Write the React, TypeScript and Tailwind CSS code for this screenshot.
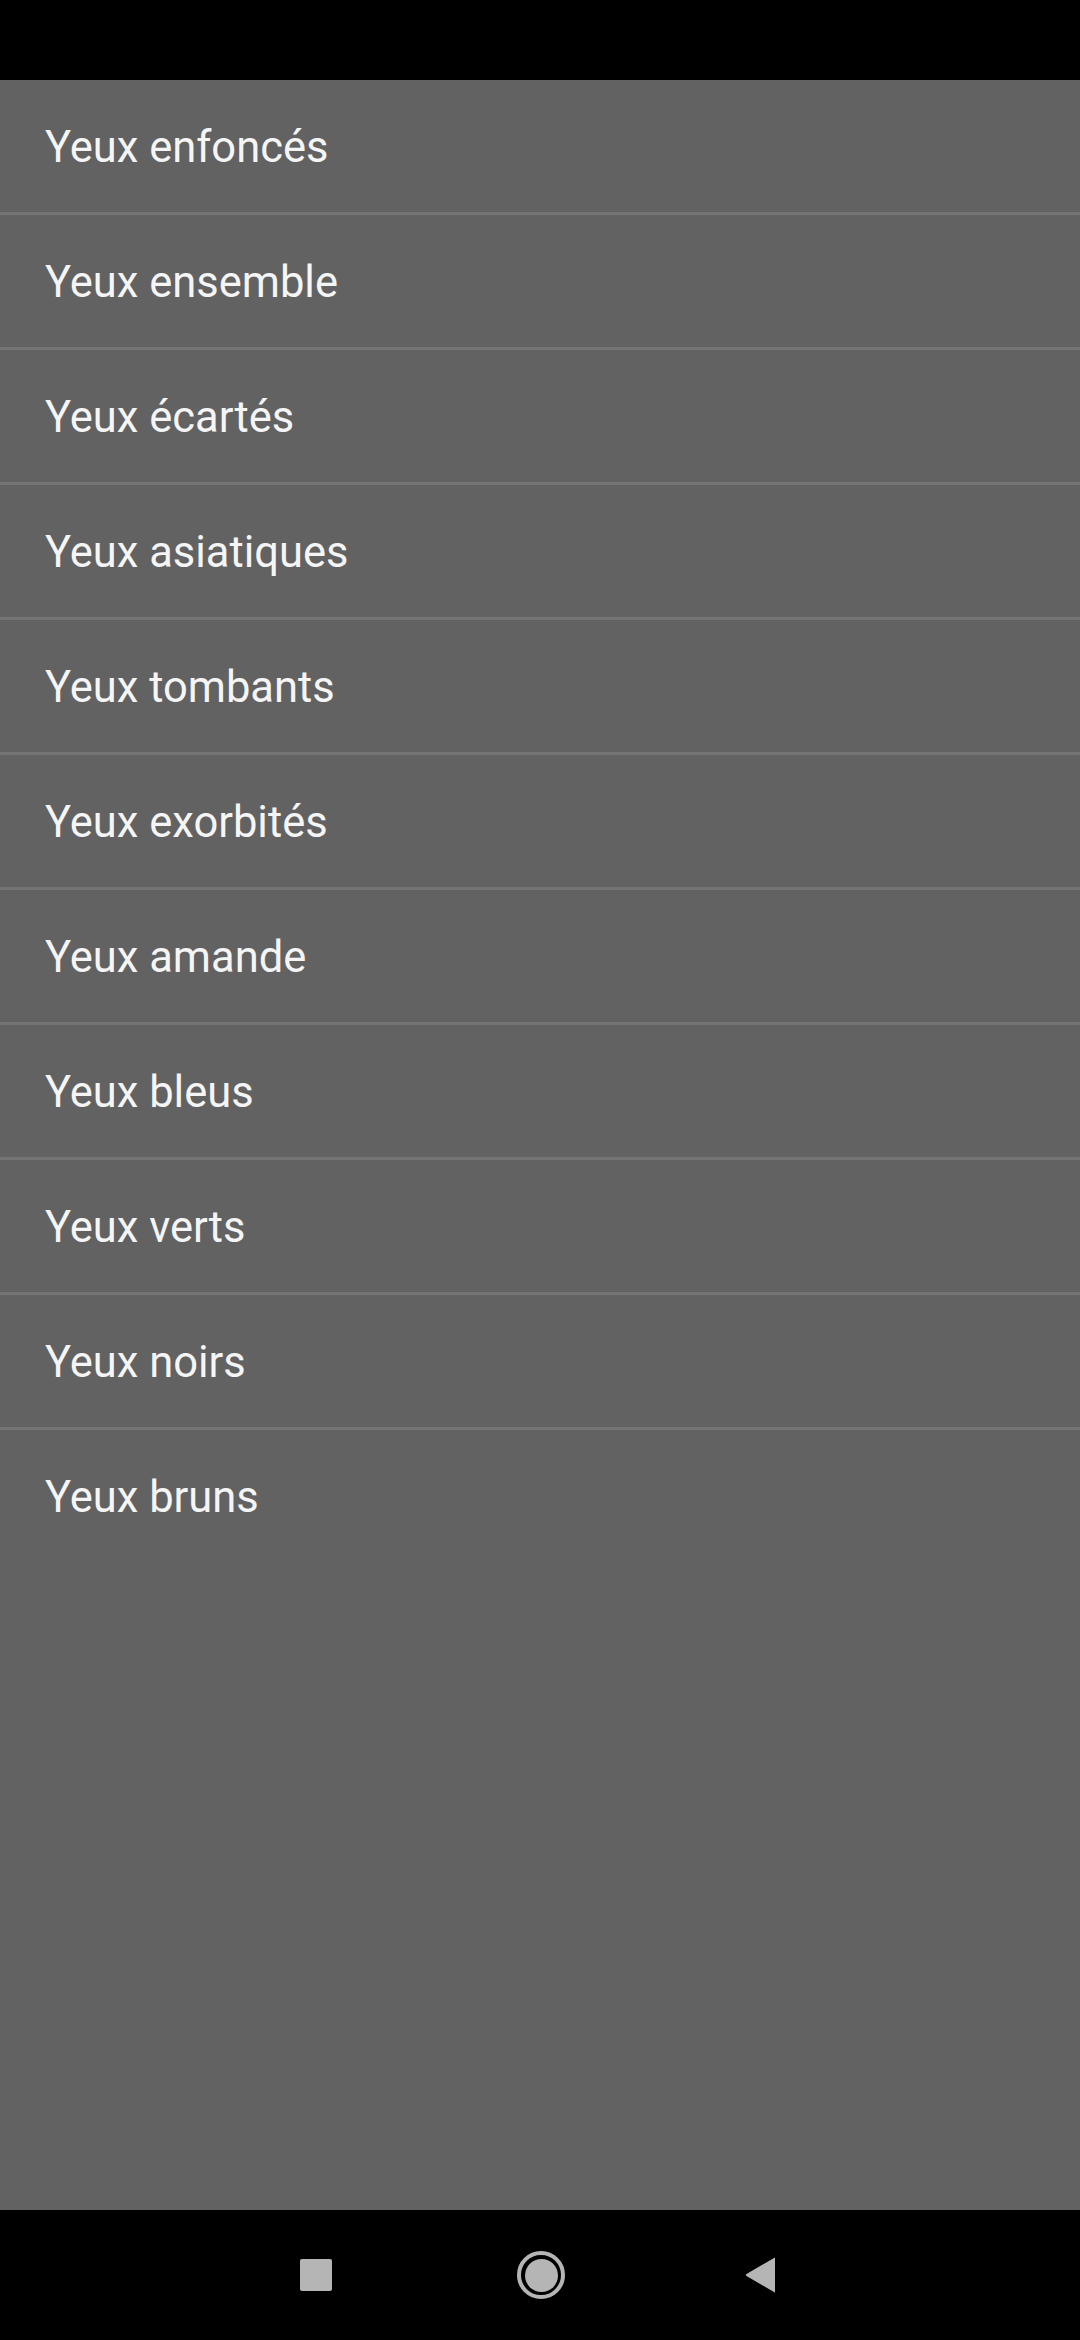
const items = [
  'Yeux enfoncés',
  'Yeux ensemble',
  'Yeux écartés',
  'Yeux asiatiques',
  'Yeux tombants',
  'Yeux exorbités',
  'Yeux amande',
  'Yeux bleus',
  'Yeux verts',
  'Yeux noirs',
  'Yeux bruns',
]

export default function App() {
  return (
    <div className="w-[1080px] h-[2340px] flex flex-col bg-[#626262] overflow-hidden" style={{ fontFamily: 'Roboto, "Noto Sans", sans-serif' }}>
      {/* status bar */}
      <div className="h-[80px] shrink-0 bg-black" />

      {/* list */}
      <div className="flex-1 flex flex-col">
        {items.map((t, i) => (
          <div key={t}>
            <div className="h-[132px] flex items-center pl-[45px] pt-[3px] text-[43.5px] text-[#f5f5f5] leading-none">{t}</div>
            {i < items.length - 1 && <div className="h-[3px] bg-[#747474]" />}
          </div>
        ))}
      </div>

      {/* nav bar */}
      <div className="h-[130px] shrink-0 bg-black flex items-center pl-[300px]">
        <div className="w-[32px] h-[32px] rounded-[2px] bg-[#b5b5b5]" />
        <div className="ml-[185px] w-[48px] h-[48px] rounded-full border-[4px] border-[#b5b5b5] flex items-center justify-center">
          <div className="w-[33px] h-[33px] rounded-full bg-[#b5b5b5]" />
        </div>
        <svg className="ml-[180px]" width="31" height="36" viewBox="0 0 31 36">
          <path d="M30 1 L30 35 Q30 36 29 35 L1.5 19 Q0 18 1.5 17 L29 1 Q30 0 30 1 Z" fill="#b5b5b5" />
        </svg>
      </div>
    </div>
  )
}
